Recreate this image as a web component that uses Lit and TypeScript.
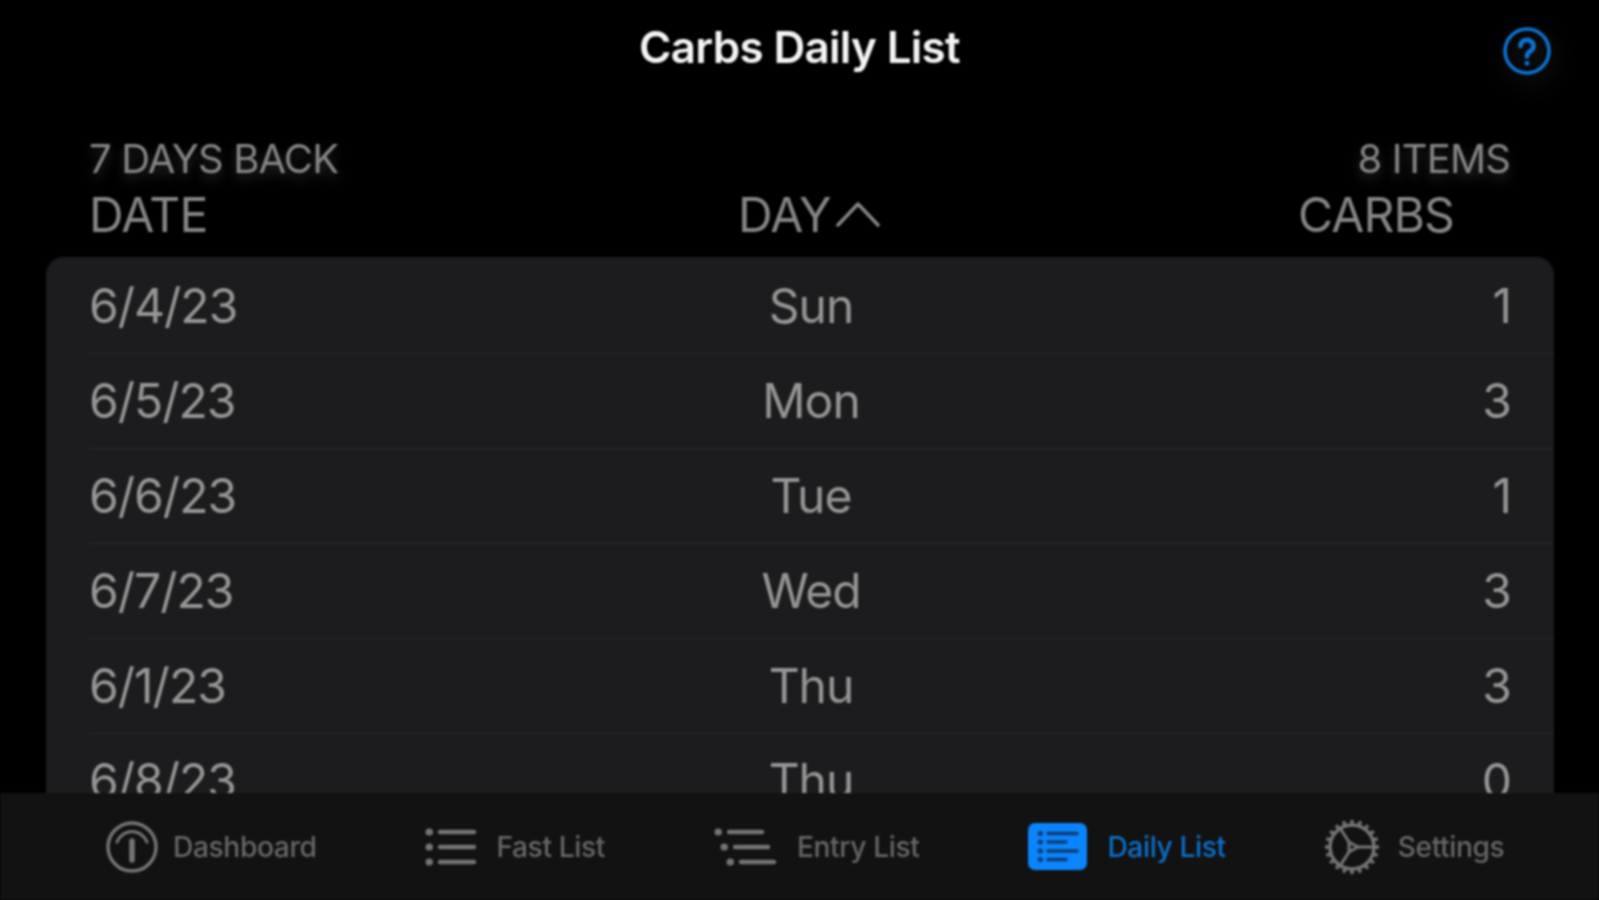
import { LitElement, html, css, svg } from 'lit';
import { customElement } from 'lit/decorators.js';

const rows = [
  ['6/4/23', 'Sun', '1'],
  ['6/5/23', 'Mon', '3'],
  ['6/6/23', 'Tue', '1'],
  ['6/7/23', 'Wed', '3'],
  ['6/1/23', 'Thu', '3'],
  ['6/8/23', 'Thu', '0'],
];

const gearTeeth = Array.from({ length: 20 }, (_, i) => {
  const a = (i * Math.PI) / 10;
  const x1 = 30 + Math.cos(a) * 22;
  const y1 = 30 + Math.sin(a) * 22;
  const x2 = 30 + Math.cos(a) * 27;
  const y2 = 30 + Math.sin(a) * 27;
  return svg`<line x1=${x1} y1=${y1} x2=${x2} y2=${y2} stroke-width="3.500"></line>`;
});

const icons = {
  gauge: html`<svg width="52" height="52" viewBox="0 0 52 52" fill="none" stroke="currentColor" stroke-linecap="round">
    <circle cx="26" cy="26" r="24" stroke-width="3.500"></circle>
    <path d="M11 21a16 16 0 0 1 30 0" stroke-width="3"></path>
    <path d="M26 20v19" stroke-width="5.500"></path>
  </svg>`,
  fast: html`<svg width="52" height="44" viewBox="0 0 52 44" fill="none" stroke="currentColor" stroke-linecap="round">
    <path d="M15 7h34M15 22h34M15 37h34" stroke-width="4.500"></path>
    <path d="M4 7h.5M4 22h.5M4 37h.5" stroke-width="7"></path>
  </svg>`,
  entry: html`<svg width="63" height="44" viewBox="0 0 63 44" fill="none" stroke="currentColor" stroke-linecap="round">
    <path d="M15 7h33M21 22h33M27 37h33" stroke-width="4.500"></path>
    <path d="M4 7h.5M10 22h.5M16 37h.5" stroke-width="7"></path>
  </svg>`,
  daily: html`<svg width="59" height="47" viewBox="0 0 59 47">
    <rect width="59" height="47" rx="7" fill="#0a84ff"></rect>
    <g fill="none" stroke="#0f3d70" stroke-linecap="round">
      <path d="M20 10.500h29M20 19h18M20 28h29M20 36.500h18" stroke-width="3.500"></path>
      <path d="M12 10.500h.5M12 19h.5M12 28h.5M12 36.500h.5" stroke-width="5"></path>
    </g>
  </svg>`,
  gear: html`<svg width="56" height="56" viewBox="2 2 56 56" fill="none" stroke="currentColor">
    <circle cx="30" cy="30" r="22" stroke-width="3.500"></circle>
    ${gearTeeth}
    <path d="M27 25 36 30 27 35Z" stroke-width="3" stroke-linejoin="round"></path>
    <path d="M36 30h15M27 25 18 11M27 35l-9 14" stroke-width="3" stroke-linecap="round"></path>
  </svg>`,
};

const tabs = [
  { label: 'Dashboard', icon: icons.gauge },
  { label: 'Fast List', icon: icons.fast },
  { label: 'Entry List', icon: icons.entry },
  { label: 'Daily List', icon: icons.daily, active: true },
  { label: 'Settings', icon: icons.gear },
];

@customElement('app-root')
export class AppRoot extends LitElement {
  static styles = css`
    :host {
      display: block;
      width: 1599px;
      height: 900px;
      background: #000;
      overflow: hidden;
      font-family: Inter, 'Liberation Sans', sans-serif;
    }

    .screen {
      display: flex;
      flex-direction: column;
      height: 900px;
      filter: blur(1px);
    }

    .nav {
      position: relative;
      height: 96px;
      padding-bottom: 2px;
      box-sizing: border-box;
      display: flex;
      align-items: center;
      justify-content: center;
      color: #f4f4f4;
      font-size: 44px;
      font-weight: 600;
      letter-spacing: -0.7px;
    }

    .help {
      position: absolute;
      right: 48px;
      top: 27px;
      width: 48px;
      height: 48px;
      color: #0a74d6;
      filter: drop-shadow(4px 8px 10px rgba(255, 255, 255, 0.14));
    }

    .section {
      padding: 41px 89px 0;
      color: #858585;
    }

    .meta {
      display: flex;
      justify-content: space-between;
      font-size: 40px;
      line-height: 44px;
      letter-spacing: -0.85px;
      text-shadow: 0 6px 12px rgba(255, 255, 255, 0.18);
    }

    .cols {
      display: grid;
      grid-template-columns: 649px 1fr auto;
      font-size: 48px;
      line-height: 56px;
      letter-spacing: -0.85px;
      padding: 6px 56px 0 0;
      height: 70px;
    }

    .day-head {
      display: flex;
      align-items: flex-start;
      gap: 5px;
    }

    .day-head svg {
      margin-top: 13px;
    }

    .card {
      flex: 1;
      min-height: 0;
      margin: 0 45px 0 46px;
      padding-top: 1.5px;
      background: #1c1c1e;
      border-radius: 18px 18px 0 0;
      overflow: hidden;
    }

    .row {
      display: grid;
      grid-template-columns: 660px 124px 1fr;
      align-items: center;
      height: 95px;
      margin-left: 43px;
      padding-right: 43px;
      border-bottom: 1px solid #2a2a2c;
      box-sizing: border-box;
      color: #959595;
      font-size: 48px;
      letter-spacing: -1px;
    }

    .day {
      text-align: center;
    }

    .value {
      text-align: right;
    }

    .tabs {
      height: 107px;
      flex: none;
      display: flex;
      align-items: center;
      gap: 109px;
      padding-left: 106px;
      background: #121212;
      color: #666;
      font-size: 28.2px;
      font-weight: 500;
      letter-spacing: -0.4px;
    }

    .tab {
      display: flex;
      align-items: center;
      gap: 19px;
    }

    .tab:first-child {
      gap: 15px;
    }

    .tab:nth-child(3),
    .tab:nth-child(4) {
      gap: 20px;
    }

    .tab:last-child {
      margin-left: -11px;
      gap: 18px;
    }

    .tab.active {
      color: #0a6fc9;
    }

    .tab svg {
      color: #747474;
      display: block;
    }
  `;

  render() {
    return html`
      <div class="screen">
        <div class="nav">
          Carbs Daily List
          <svg class="help" viewBox="0 0 48 48" fill="none" stroke="currentColor">
            <circle cx="24" cy="24" r="22" stroke-width="3.500"></circle>
            <path d="M17.500 19a6.500 6 0 1 1 10 5c-2.500 1.500-3.500 2.500-3.500 5.500" stroke-width="4.500" stroke-linecap="round"></path>
            <path d="M24 36v.5" stroke-width="4.500" stroke-linecap="round"></path>
          </svg>
        </div>
        <div class="section">
          <div class="meta"><span>7 DAYS BACK</span><span>8 ITEMS</span></div>
          <div class="cols">
            <span>DATE</span>
            <span class="day-head">
              DAY
              <svg width="44" height="28" viewBox="0 0 44 28" fill="none" stroke="currentColor" stroke-width="3.500" stroke-linecap="round" stroke-linejoin="round"><path d="M2 25 22 4l20 21"></path></svg>
            </span>
            <span>CARBS</span>
          </div>
        </div>
        <div class="card">
          ${rows.map(
            ([date, day, value]) => html`
              <div class="row">
                <span>${date}</span>
                <span class="day">${day}</span>
                <span class="value">${value}</span>
              </div>
            `
          )}
        </div>
        <div class="tabs">
          ${tabs.map(
            (t) => html`<div class="tab ${t.active ? 'active' : ''}">${t.icon}<span>${t.label}</span></div>`
          )}
        </div>
      </div>
    `;
  }
}
